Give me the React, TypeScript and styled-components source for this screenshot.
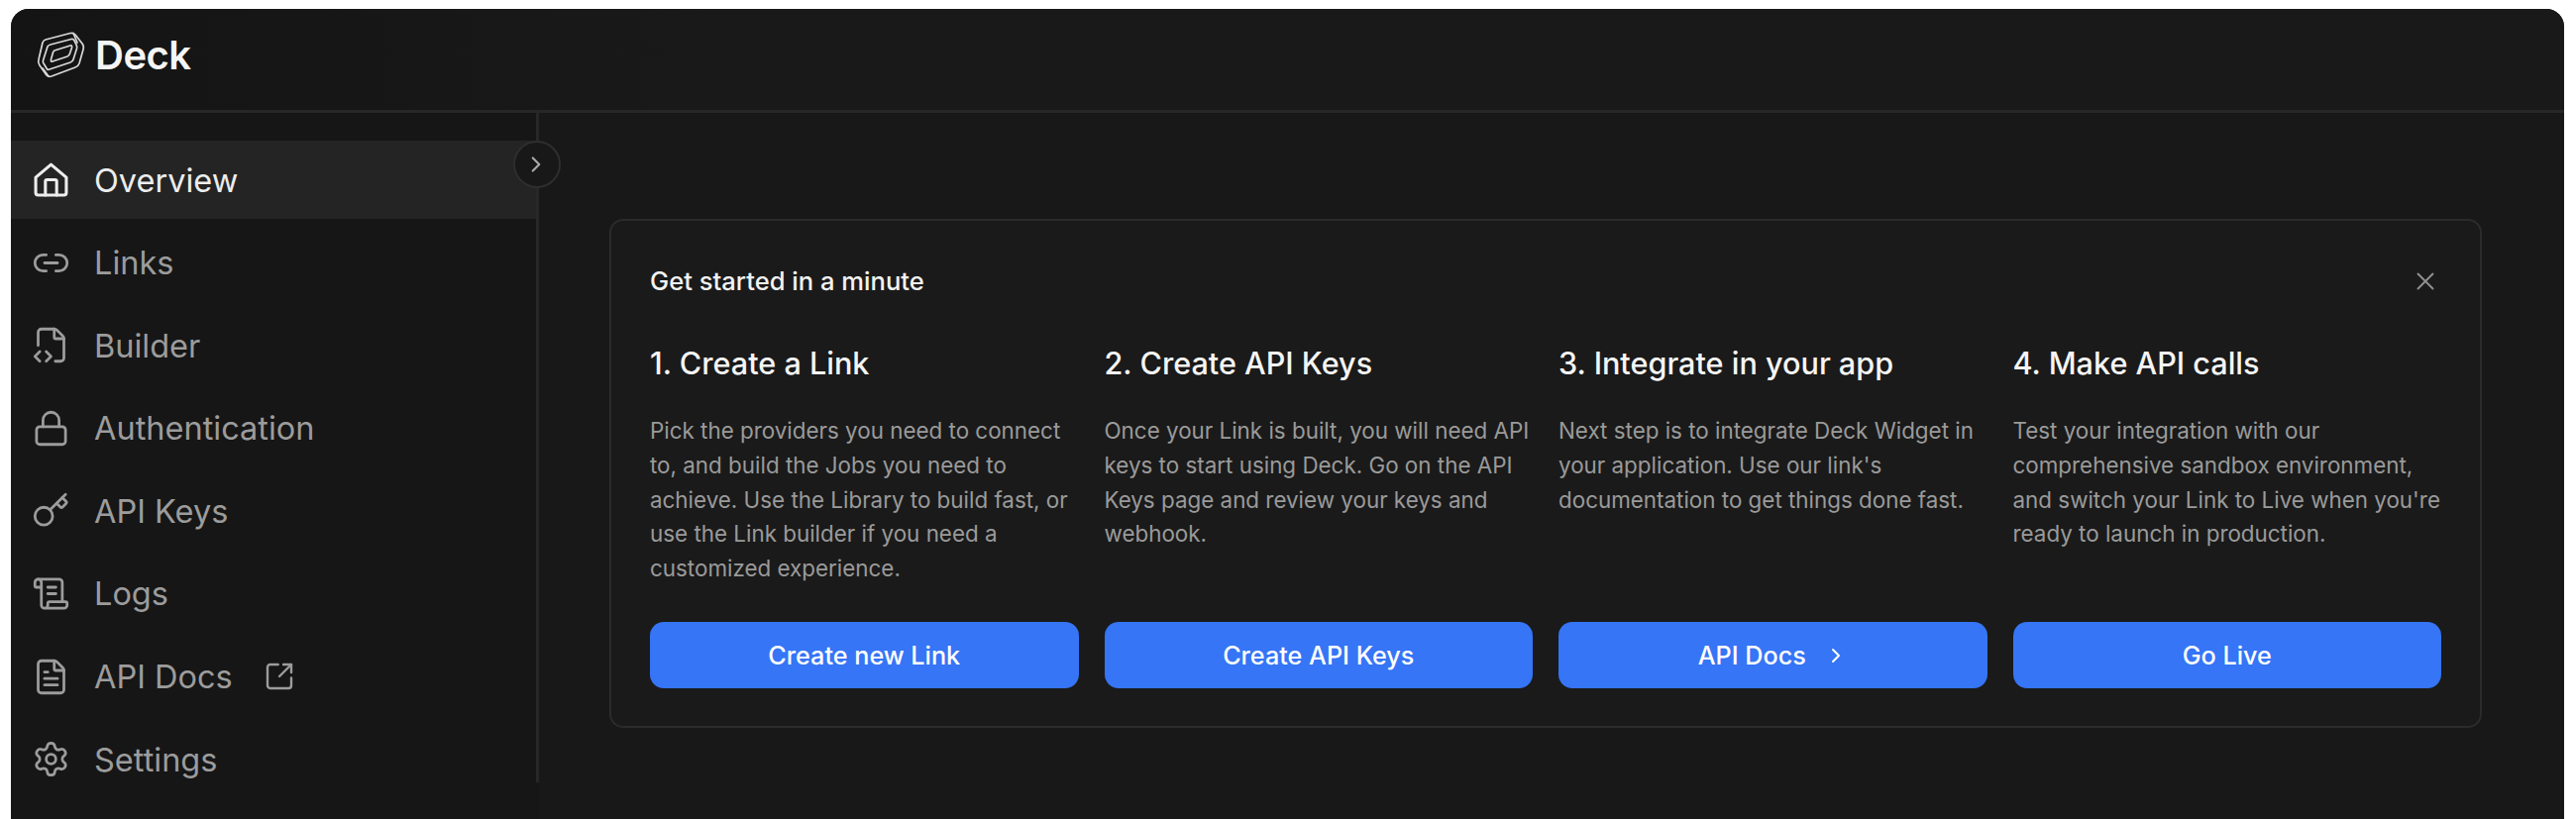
/* IMPORTS */
import React from 'react';
import styled, { createGlobalStyle } from 'styled-components';
import {
  ChevronRight,
  FileCode2,
  FileText,
  Key,
  Link2,
  Lock,
  ScrollText,
  Settings,
  SquareArrowOutUpRight,
  X,
} from 'lucide-react';

/* STYLES */
const GlobalStyle = createGlobalStyle`
  html, body {
    margin: 0;
    background: #ffffff;
    font-family: Inter, "Liberation Sans", sans-serif;
  }
  * {
    box-sizing: border-box;
  }
`;

const Page = styled.div`
  height: 827px;
  padding: 9px 12px 0 11px;
  background: #ffffff;
  overflow: hidden;
`;

const Window = styled.div`
  display: flex;
  flex-direction: column;
  height: 100%;
  background: #181818;
  border-radius: 18px 18px 0 0;
  overflow: hidden;
`;

const Header = styled.header`
  display: flex;
  align-items: center;
  gap: 9px;
  flex: 0 0 105px;
  padding: 0 0 10px 25px;
  background: linear-gradient(90deg, #141414 0, #191919 700px);
  border-bottom: 3px solid #272727;
`;

const LogoText = styled.span`
  color: #f5f5f5;
  font-size: 40px;
  font-weight: 600;
  letter-spacing: -0.5px;
`;

const Body = styled.div`
  display: flex;
  flex: 1;
  min-height: 0;
`;

const Sidebar = styled.nav`
  position: relative;
  flex: 0 0 533px;
  height: 676px;
  padding-top: 28px;
  display: flex;
  flex-direction: column;
  gap: 4.6px;
  background: #161616;
  border-right: 3px solid #272727;
`;

const SidebarFill = styled.div`
  position: absolute;
  left: 0;
  top: 100%;
  width: 533px;
  height: 40px;
  background: #161616;
`;

const NavRow = styled.a<{ $active?: boolean }>`
  flex: none;
  display: flex;
  align-items: center;
  height: 79px;
  padding-left: 21px;
  gap: 24px;
  font-size: 32.5px;
  font-weight: 400;
  color: ${(props) => (props.$active ? '#ededed' : '#9c9c9c')};
  background: ${(props) => (props.$active ? '#242424' : 'transparent')};

  svg {
    flex: none;
  }
`;

const NavLabel = styled.span`
  padding-top: 2px;
  line-height: 40px;
`;

const ExternalMark = styled.span`
  display: flex;
  margin-left: 7px;
`;

const CollapseButton = styled.button`
  position: absolute;
  top: 28px;
  right: -25px;
  width: 48px;
  height: 48px;
  padding: 0 2px 0 0;
  display: flex;
  align-items: center;
  justify-content: center;
  color: #a8a8a8;
  background: #181818;
  border: 2px solid #2e2e2e;
  border-radius: 50%;
`;

const Main = styled.main`
  flex: 1;
  padding: 107px 83px 0 71px;
`;

const Card = styled.section`
  padding: 45px 39px 38px 39px;
  height: 514px;
  display: flex;
  flex-direction: column;
  background: #1a1a1a;
  border: 2px solid #2b2b2b;
  border-radius: 14px;
`;

const CardTop = styled.div`
  display: flex;
  align-items: center;
  justify-content: space-between;
  height: 32px;
`;

const CardTitle = styled.h2`
  margin: 0;
  color: #f2f2f2;
  font-size: 25.6px;
  font-weight: 450;
  line-height: 32px;
`;

const CloseIcon = styled.span`
  display: flex;
  margin-right: 1px;
  color: #8f8f8f;
`;

const Steps = styled.div`
  flex: 1;
  display: grid;
  grid-template-columns: repeat(4, 1fr);
  column-gap: 26px;
  margin-top: 47px;
`;

const Step = styled.article`
  display: flex;
  flex-direction: column;
`;

const StepTitle = styled.h3`
  margin: 0;
  color: #f5f5f5;
  font-size: 30.6px;
  font-weight: 450;
  line-height: 40px;
`;

const StepText = styled.p`
  margin: 31px 0 0;
  color: #9a9a9a;
  font-size: 22.4px;
  font-weight: 400;
  line-height: 34.8px;
`;

const StepButton = styled.button`
  display: flex;
  align-items: center;
  justify-content: center;
  gap: 18px;
  height: 67px;
  margin-top: auto;
  color: #ffffff;
  background: #3575f6;
  border: none;
  border-radius: 14px;
  font-family: inherit;
  font-size: 25.2px;
  font-weight: 450;
`;

/* COMPONENTS */
function DeckLogo() {
  return (
    <svg width="51" height="49" viewBox="12 6 51 49" fill="none" stroke="#d8d8d8" strokeWidth="1.7" strokeLinejoin="round" strokeLinecap="round">
      <path d="M22 15 L47 8.500 Q50 8 52 10 L59 19 Q61 21.500 60 25 L56 39 Q55 42 52 43 L28 52 Q25 53 23 51 L16 41 Q14 38 15 35 L19 18 Q20 15.500 22 15 Z" />
      <path d="M27 20 L48 14.500 Q50 14 51 16 L53 20 Q54 22 53.500 24 L50 35 Q49.500 37 47 38 L26 45 Q24 46 23 44 L20 39 Q19 38 19.500 36 L24 22 Q25 20.500 27 20 Z" />
      <path d="M31 26 L47 21 Q49 20.500 48.500 23 L46.500 29 Q46 31 44 32 L29 37 Q27 38 27.500 35 L29.500 28 Q30 26.500 31 26 Z" />
      <path d="M50 8.500 L54 18 M19 44 L25 52" />
    </svg>
  );
}

function HomeIcon() {
  return (
    <svg width="39" height="39" viewBox="0 0 24 24" fill="none" stroke="currentColor" strokeWidth="1.9" strokeLinejoin="round" strokeLinecap="round">
      <path d="M2.500 10.500 L12 2.500 L21.500 10.500 V20 a1.500 1.500 0 0 1 -1.500 1.500 H4 a1.500 1.500 0 0 1 -1.500 -1.500 Z" />
      <path d="M8.500 21.500 V13 a1 1 0 0 1 1 -1 h5 a1 1 0 0 1 1 1 V21.500" />
    </svg>
  );
}

/* DATA */
const navItems = [
  { label: 'Overview', icon: <HomeIcon />, active: true },
  { label: 'Links', icon: <Link2 size={39} strokeWidth={1.7} /> },
  { label: 'Builder', icon: <FileCode2 size={39} strokeWidth={1.7} /> },
  { label: 'Authentication', icon: <Lock size={39} strokeWidth={1.7} /> },
  { label: 'API Keys', icon: <Key size={39} strokeWidth={1.7} /> },
  { label: 'Logs', icon: <ScrollText size={39} strokeWidth={1.7} /> },
  { label: 'API Docs', icon: <FileText size={39} strokeWidth={1.7} />, external: true },
  { label: 'Settings', icon: <Settings size={39} strokeWidth={1.7} /> },
];

const steps = [
  {
    title: '1. Create a Link',
    text: 'Pick the providers you need to connect to, and build the Jobs you need to achieve. Use the Library to build fast, or use the Link builder if you need a customized experience.',
    action: 'Create new Link',
  },
  {
    title: '2. Create API Keys',
    text: 'Once your Link is built, you will need API keys to start using Deck. Go on the API Keys page and review your keys and webhook.',
    action: 'Create API Keys',
  },
  {
    title: '3. Integrate in your app',
    text: "Next step is to integrate Deck Widget in your application. Use our link's documentation to get things done fast.",
    action: 'API Docs',
    chevron: true,
  },
  {
    title: '4. Make API calls',
    text: "Test your integration with our comprehensive sandbox environment, and switch your Link to Live when you're ready to launch in production.",
    action: 'Go Live',
  },
];

function App() {
  /* RENDER */
  return (
    <>
      <GlobalStyle />
      <Page>
        <Window>
          <Header>
            <DeckLogo />
            <LogoText>Deck</LogoText>
          </Header>
          <Body>
            <Sidebar>
              {navItems.map(({ label, icon, active, external }) => (
                <NavRow key={label} $active={active}>
                  {icon}
                  <NavLabel>{label}</NavLabel>
                  {external ? (
                    <ExternalMark>
                      <SquareArrowOutUpRight size={32} strokeWidth={1.8} />
                    </ExternalMark>
                  ) : null}
                </NavRow>
              ))}
              <CollapseButton>
                <ChevronRight size={26} strokeWidth={2} />
              </CollapseButton>
              <SidebarFill />
            </Sidebar>
            <Main>
              <Card>
                <CardTop>
                  <CardTitle>Get started in a minute</CardTitle>
                  <CloseIcon>
                    <X size={30} strokeWidth={1.5} />
                  </CloseIcon>
                </CardTop>
                <Steps>
                  {steps.map((step) => (
                    <Step key={step.title}>
                      <StepTitle>{step.title}</StepTitle>
                      <StepText>{step.text}</StepText>
                      <StepButton>
                        {step.action}
                        {step.chevron ? <ChevronRight size={24} strokeWidth={2} /> : null}
                      </StepButton>
                    </Step>
                  ))}
                </Steps>
              </Card>
            </Main>
          </Body>
        </Window>
      </Page>
    </>
  );
}

export default App;
